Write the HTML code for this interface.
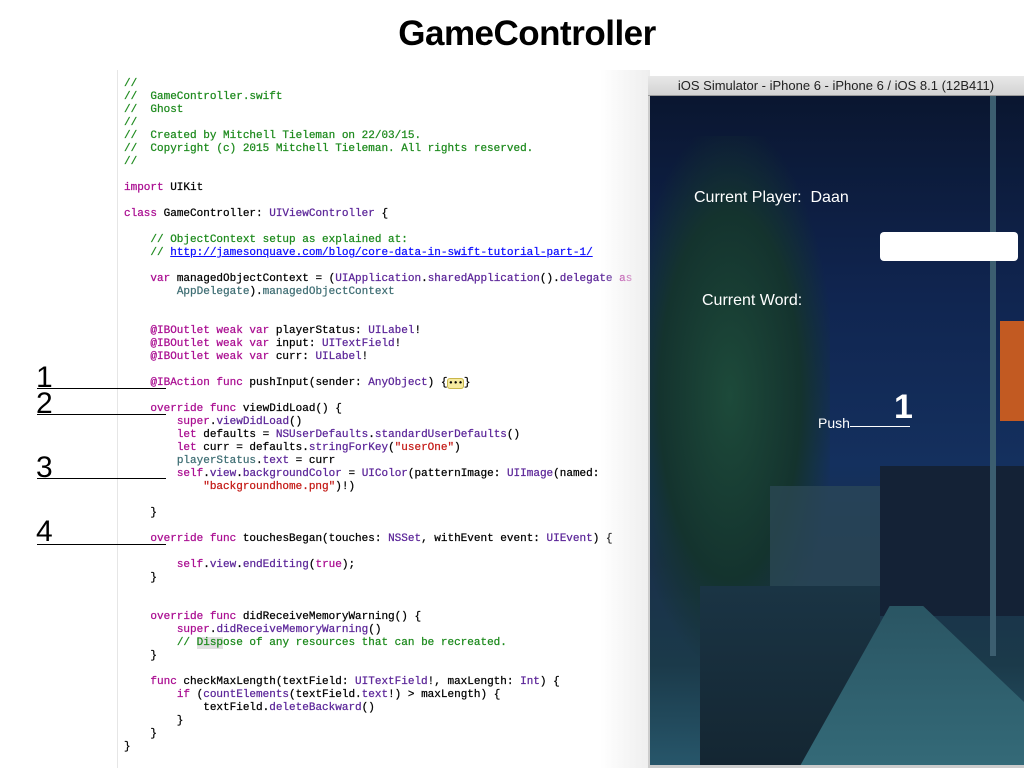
<!DOCTYPE html>
<html><head><meta charset="utf-8"><style>
body{margin:0;width:1024px;height:768px;background:#fff;position:relative;overflow:hidden;font-family:"Liberation Sans",sans-serif}
.t{position:absolute;left:0;top:14px;width:1054px;text-align:center;font-weight:bold;font-size:35px;color:#000;letter-spacing:-0.5px}
.code{position:absolute;left:124px;top:78px;font-family:"Liberation Mono",monospace;font-size:11px;line-height:13px;white-space:pre;color:#000;-webkit-text-stroke:0.25px}
.c{color:#1d8a1d}.k{color:#aa0d91}.ty{color:#5c2699}.m{color:#3f6e74}.s{color:#c41a16}.u{color:#0e0eff;text-decoration:underline}
.gut{position:absolute;left:117px;top:70px;width:1px;height:698px;background:#e6e6e6}
.fade{position:absolute;left:600px;top:70px;width:50px;height:698px;background:linear-gradient(90deg,rgba(255,255,255,0),#eee)}
.n{position:absolute;font-size:30px;font-weight:300;color:#000;line-height:30px}
.ln{position:absolute;height:1px;background:#000}
.sim{position:absolute;left:648px;top:76px;width:376px;height:692px;background:#ccc}
.bar{position:absolute;left:0;top:0;width:376px;height:19px;background:linear-gradient(#e8e8e8,#d3d3d3);font-size:13px;color:#222;text-align:center;line-height:19px;border-bottom:1px solid #999}
.scr{position:absolute;left:2px;top:20px;width:374px;height:669px;overflow:hidden;background:linear-gradient(180deg,#0a1630 0%,#102550 30%,#14305e 55%,#19304a 70%,#1b3a4a 85%,#27566a 100%)}
.w{position:absolute;color:#fff;font-size:16px}
</style></head><body>
<div class="t">GameController</div>
<div class="gut"></div>
<div class="code"><span class="c">//
//  GameController.swift
//  Ghost
//
//  Created by Mitchell Tieleman on 22/03/15.
//  Copyright (c) 2015 Mitchell Tieleman. All rights reserved.
//</span>

<span class="k">import</span> UIKit

<span class="k">class</span> GameController: <span class="ty">UIViewController</span> {

    <span class="c">// ObjectContext setup as explained at:
    // <span class="u">http://jamesonquave.com/blog/core-data-in-swift-tutorial-part-1/</span></span>

    <span class="k">var</span> managedObjectContext = (<span class="ty">UIApplication</span>.<span class="ty">sharedApplication</span>().<span class="ty">delegate</span> <span class="k">as</span>
        <span class="m">AppDelegate</span>).<span class="m">managedObjectContext</span>


    <span class="k">@IBOutlet weak var</span> playerStatus: <span class="ty">UILabel</span>!
    <span class="k">@IBOutlet weak var</span> input: <span class="ty">UITextField</span>!
    <span class="k">@IBOutlet weak var</span> curr: <span class="ty">UILabel</span>!

    <span class="k">@IBAction func</span> pushInput(sender: <span class="ty">AnyObject</span>) {<span style="background:#f5eaa0;border:1px solid #c9b64a;border-radius:3px;font-size:8px">•••</span>}

    <span class="k">override func</span> viewDidLoad() {
        <span class="k">super</span>.<span class="ty">viewDidLoad</span>()
        <span class="k">let</span> defaults = <span class="ty">NSUserDefaults</span>.<span class="ty">standardUserDefaults</span>()
        <span class="k">let</span> curr = defaults.<span class="ty">stringForKey</span>(<span class="s">"userOne"</span>)
        <span class="m">playerStatus</span>.<span class="ty">text</span> = curr
        <span class="k">self</span>.<span class="ty">view</span>.<span class="ty">backgroundColor</span> = <span class="ty">UIColor</span>(patternImage: <span class="ty">UIImage</span>(named:
            <span class="s">"backgroundhome.png"</span>)!)

    }

    <span class="k">override func</span> touchesBegan(touches: <span class="ty">NSSet</span>, withEvent event: <span class="ty">UIEvent</span>) {

        <span class="k">self</span>.<span class="ty">view</span>.<span class="ty">endEditing</span>(<span class="k">true</span>);
    }


    <span class="k">override func</span> didReceiveMemoryWarning() {
        <span class="k">super</span>.<span class="ty">didReceiveMemoryWarning</span>()
        <span class="c">// <span style="background:#e0e0e0">Disp</span>ose of any resources that can be recreated.</span>
    }

    <span class="k">func</span> checkMaxLength(textField: <span class="ty">UITextField</span>!, maxLength: <span class="ty">Int</span>) {
        <span class="k">if</span> (<span class="ty">countElements</span>(textField.<span class="ty">text</span>!) &gt; maxLength) {
            textField.<span class="ty">deleteBackward</span>()
        }
    }
}
</div>
<div class="fade"></div>
<div class="n" style="left:36px;top:363px">1</div><div class="ln" style="left:37px;top:388px;width:129px"></div>
<div class="n" style="left:36px;top:389px">2</div><div class="ln" style="left:37px;top:414px;width:129px"></div>
<div class="n" style="left:36px;top:453px">3</div><div class="ln" style="left:37px;top:478px;width:129px"></div>
<div class="n" style="left:36px;top:517px">4</div><div class="ln" style="left:37px;top:544px;width:129px"></div>
<div class="sim">
<div class="bar">iOS Simulator - iPhone 6 - iPhone 6 / iOS 8.1 (12B411)</div>
<div class="scr">
<div style="position:absolute;left:-20px;top:40px;width:200px;height:520px;background:radial-gradient(ellipse at 50% 50%,#1d4a3a 0%,#14332e 50%,rgba(15,35,40,0) 75%)"></div>
<div style="position:absolute;left:120px;top:390px;width:120px;height:120px;background:#2e4a58;opacity:.7"></div>
<div style="position:absolute;left:230px;top:370px;width:144px;height:150px;background:#142236"></div>
<div style="position:absolute;left:350px;top:225px;width:24px;height:100px;background:#c25a22"></div>
<div style="position:absolute;left:50px;top:490px;width:180px;height:180px;background:linear-gradient(#1a3444,#142632)"></div>
<div style="position:absolute;left:150px;top:510px;width:224px;height:160px;background:linear-gradient(#2a5563,#346a78);clip-path:polygon(40% 0,55% 0,100% 60%,100% 100%,0 100%)"></div>
<div style="position:absolute;left:340px;top:0;width:6px;height:560px;background:#3c5e70"></div>
<div class="w" style="left:44px;top:93px">Current Player:&nbsp; Daan</div>
<div style="position:absolute;left:230px;top:136px;width:138px;height:29px;background:#fff;border-radius:4px"></div>
<div class="w" style="left:52px;top:196px">Current Word:</div>
<div class="w" style="left:168px;top:319px;font-size:14px">Push</div>
<div style="position:absolute;left:200px;top:330px;width:60px;height:1px;background:#fff"></div>
<div class="w" style="left:244px;top:292px;font-size:34px;font-weight:bold">1</div>
</div></div>
</body></html>
